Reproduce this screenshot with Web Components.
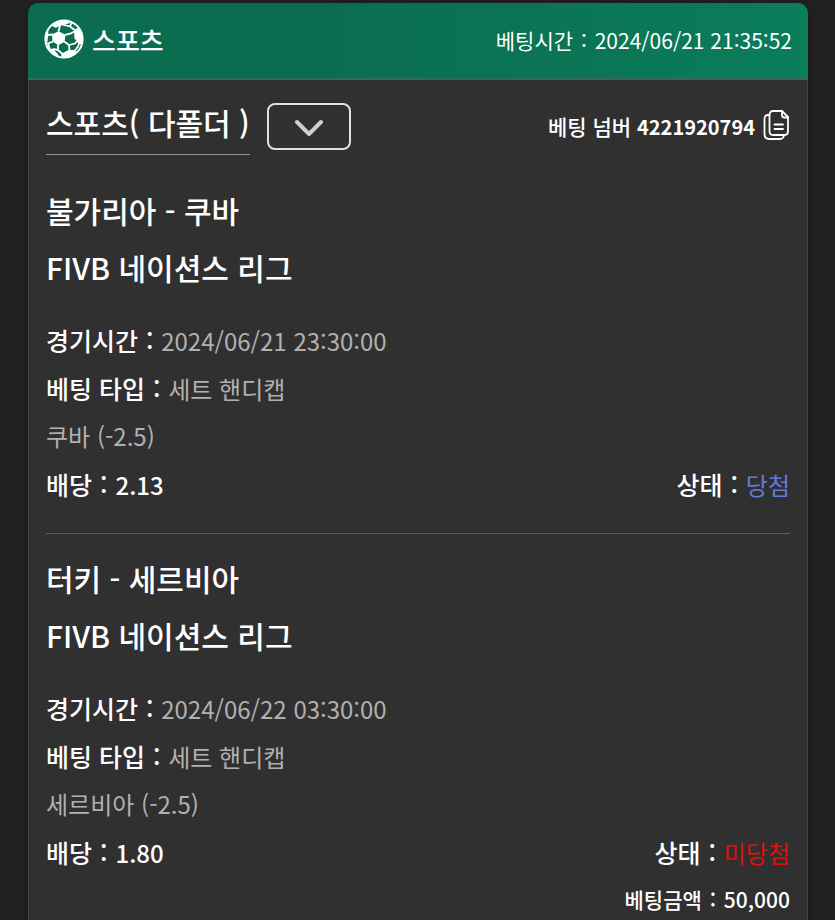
<!DOCTYPE html>
<html lang="ko">
<head>
<meta charset="utf-8">
<meta name="viewport" content="width=device-width, initial-scale=1">
<title>스포츠</title>
<style>
    html {
        scrollbar-width: none;
    }

    body {
        margin: 0;
        padding: 3px 27px 0 28px;
        background: #222222;
        color: #ffffff;
        font-family: "Noto Sans CJK KR", sans-serif;
    }
</style>
</head>
<body>

<bet-card time="2024/06/21 21:35:52">
    <bet-summary number="4221920794">스포츠( 다폴더 )</bet-summary>
    <bet-match league="FIVB 네이션스 리그" time="2024/06/21 23:30:00" type="세트 핸디캡" pick="쿠바 (-2.5)" odds="2.13" status="당첨" result="win">불가리아 - 쿠바</bet-match>
    <bet-match league="FIVB 네이션스 리그" time="2024/06/22 03:30:00" type="세트 핸디캡" pick="세르비아 (-2.5)" odds="1.80" status="미당첨" result="lose">터키 - 세르비아</bet-match>
    <bet-total>50,000</bet-total>
</bet-card>

<template id="bet-card">
<style>
    :host {
        display: block;
        border-radius: 10px 10px 0 0;
        background: #303030;
        box-shadow: 0 0 10px #1a1a1a;
    }

    header {
        display: flex;
        align-items: center;
        justify-content: space-between;
        height: 74px;
        padding: 0 16px 1px;
        border-bottom: 2px solid #33695c;
        border-radius: 10px 10px 0 0;
        background: linear-gradient(90deg, #0b6c50 35%, #0a7d5a);
    }

    .brand {
        display: flex;
        align-items: center;
        gap: 8px;
        padding-bottom: 2px;
        font-size: 26px;
        font-weight: 500;
    }

    svg {
        display: block;
        width: 40px;
        height: 40px;
    }

    time {
        font-size: 21px;
    }

    .separator {
        padding: 0 2px;
    }

    main {
        padding: 23px 17px;
        border: 1px solid #414345;
        border-width: 0 1px;
    }
</style>

<header>
    <div class="brand">
        <svg viewBox="0 0 40 40" aria-hidden="true">
            <circle cx="20" cy="20" r="18.600" fill="none" stroke="#fff" stroke-width="2"/>
            <path d="M8 15.500L14.500 12.200L21.500 15.800L20.600 22.800L14.200 26.300L8.500 22.300Z" fill="#fff"/>
            <path d="M8 7L16 1.500L24 1.500L26.500 4L18.500 6L11.500 8.800Z" fill="#fff"/>
            <path d="M30 12L33 9L37 12L39 20L37.500 26L34 23.500L30.500 19.500Z" fill="#fff"/>
            <path d="M17 35L24.500 31L31 31L33 33.500L26 38.500L18 39Z" fill="#fff"/>
            <path d="M1.500 15L4.500 12L4 17.500L3.200 24.500L1.300 21ZM4.500 29L9 30L13.500 34.500L15.500 38.500L9 36Z" fill="#fff"/>
            <path d="M14.500 12.500L16 6.500M18 5.400L26 7.500L31.500 11.500M26 7.500L27.500 4M21 15.800L27 14.500L31 12M20.200 22.500L25 26L25.500 31.500M25 26L31 24.500L34.500 21M14 26L14 31L18.500 35M9 22.500L4 24.500L5.500 29M9 15.500L4 16M14 31L9 30M31 31.500L34 27.500L35.500 23" fill="none" stroke="#fff" stroke-width="1.800"/>
        </svg>
        <span>스포츠</span>
    </div>
    <div><time>베팅시간 <span class="separator">:</span> <span class="value"></span></time></div>
</header>
<main><slot></slot></main>
</template>

<template id="bet-summary">
<style>
    :host {
        display: flex;
        align-items: flex-start;
        justify-content: space-between;
        margin-bottom: 27px;
    }

    .heading,
    .number {
        display: flex;
        align-items: flex-start;
        gap: 17px;
    }

    .number {
        align-items: center;
        gap: 8px;
        height: 46px;
        font-size: 21px;
        font-weight: 500;
    }

    h1 {
        margin: 0;
        height: 51px;
        border-bottom: 1px solid #949494;
        font-size: 30px;
        font-weight: 500;
        line-height: 38px;
    }

    b {
        font-size: 20px;
    }

    button {
        padding: 0;
        border: 0;
        background: none;
        color: inherit;
        cursor: pointer;
    }

    .toggle {
        display: flex;
        align-items: center;
        justify-content: center;
        width: 84px;
        height: 47px;
        border: 2px solid #e0e0e0;
        border-radius: 8px;
    }

    svg {
        display: block;
    }
</style>

<div class="heading">
    <h1><slot></slot></h1>
    <button class="toggle" type="button" aria-label="펼치기">
        <svg width="30" height="18" viewBox="0 0 30 18" fill="none" stroke="#cfcfcf" stroke-width="4" stroke-linecap="round" stroke-linejoin="round">
            <path d="M3 4L15 16L27 4"/>
        </svg>
    </button>
</div>
<div class="number">
    <span>베팅 넘버 <b></b></span>
    <button class="copy" type="button" aria-label="복사">
        <svg width="27" height="32" viewBox="0 0 27 32" fill="none" stroke="#fff" stroke-width="1.800" stroke-linecap="round" stroke-linejoin="round">
            <path d="M10 1H19L25 7V21Q25 25 21.500 25H10Q6.500 25 6.500 21V5Q6.500 1 10 1Z"/>
            <path d="M19 1V5Q19 7.500 21.500 7.500H25"/>
            <path d="M6.500 5H5Q1.500 5 1.500 9V24Q1.500 29 6.500 29H17Q20.500 29 21 25"/>
            <path d="M11.500 14.500H20M11.500 19H20"/>
        </svg>
    </button>
</div>
</template>

<template id="bet-match">
<style>
    :host {
        display: block;
    }

    :host(:not(:last-of-type)) {
        margin-bottom: 16px;
        padding-bottom: 25px;
        border-bottom: 1px solid #5c5c5c;
    }

    h2,
    h3 {
        margin: 0;
        font-size: 30px;
        font-weight: 500;
        line-height: 57px;
    }

    h3 {
        margin-bottom: 20px;
    }

    p {
        display: flex;
        justify-content: space-between;
        margin: 0;
        height: 48px;
        color: #b0b0b0;
        font-size: 24px;
        line-height: 48px;
    }

    b {
        color: #ffffff;
        font-size: 25px;
        font-weight: 500;
    }

    .separator {
        padding: 0 1px;
    }

    .odds {
        font-size: 24px;
    }

    .status {
        color: #647bd4;
    }

    :host([result="lose"]) .status {
        color: #dc1212;
    }
</style>

<h2><slot></slot></h2>
<h3></h3>
<p><span><b>경기시간 <span class="separator">:</span></b> <span class="time"></span></span></p>
<p><span><b>베팅 타입 <span class="separator">:</span></b> <span class="type"></span></span></p>
<p class="pick"></p>
<p><b>배당 <span class="separator">:</span> <span class="odds"></span></b><span><b>상태 <span class="separator">:</span></b> <span class="status"></span></span></p>
</template>

<template id="bet-total">
<style>
    :host {
        display: block;
        font-size: 21px;
        font-weight: 500;
        line-height: 46px;
        text-align: right;
    }

    .separator {
        padding: 0 2px;
    }
</style>

베팅금액 <span class="separator">:</span> <slot></slot>
</template>

<script>
class BetElement extends HTMLElement {
    constructor() {
        super()

        const template = document.getElementById(this.localName)
        this.shadow = this.attachShadow({ mode: "open" })
        this.shadow.appendChild(template.content.cloneNode(true))
    }

    // Copies an attribute of the host into an element of its shadow root
    fill(selector, name) {
        this.shadow.querySelector(selector).textContent = this.getAttribute(name) ?? ""
    }
}

class BetCard extends BetElement {
    connectedCallback() {
        this.fill(".value", "time")
    }
}

class BetSummary extends BetElement {
    connectedCallback() {
        this.fill("b", "number")

        this.shadow.querySelector(".copy").addEventListener("click", () => {
            navigator.clipboard?.writeText(this.getAttribute("number"))
        })
        this.shadow.querySelector(".toggle").addEventListener("click", () => {
            this.parentElement.querySelectorAll("bet-match").forEach((match) => {
                match.hidden = !match.hidden
                match.style.display = match.hidden ? "none" : ""
            })
        })
    }
}

class BetMatch extends BetElement {
    connectedCallback() {
        this.fill("h3", "league")
        this.fill(".time", "time")
        this.fill(".type", "type")
        this.fill(".pick", "pick")
        this.fill(".odds", "odds")
        this.fill(".status", "status")
    }
}

class BetTotal extends BetElement {}

window.customElements.define("bet-card", BetCard)
window.customElements.define("bet-summary", BetSummary)
window.customElements.define("bet-match", BetMatch)
window.customElements.define("bet-total", BetTotal)
</script>
</body>
</html>
